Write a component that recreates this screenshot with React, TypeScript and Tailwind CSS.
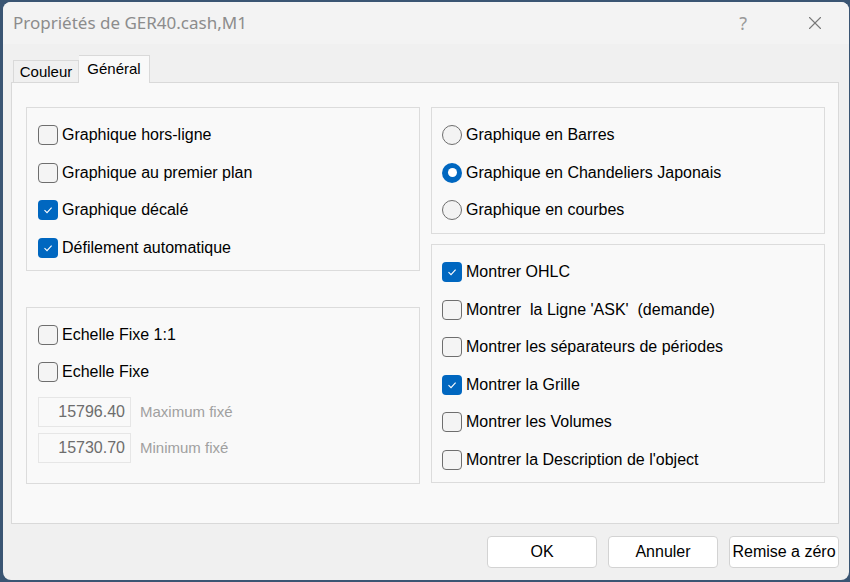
import { X } from "lucide-react";

const font = { fontFamily: '"Liberation Sans", Arial, sans-serif' };

function Check({ checked, label }: { checked?: boolean; label: string }) {
  return (
    <div className="flex items-center h-[20px]">
      {checked ? (
        <div className="w-[20px] h-[20px] rounded-[4px] bg-[#0067c0] flex items-center justify-center flex-shrink-0">
          <svg width="12" height="12" viewBox="0 0 12 12">
            <polyline points="2.5,6.2 5,8.6 9.6,3.6" fill="none" stroke="white" strokeWidth="1.1" />
          </svg>
        </div>
      ) : (
        <div className="w-[20px] h-[20px] rounded-[4px] bg-[#f4f4f4] border border-[#6e6e6e] flex-shrink-0" />
      )}
      <span className="ml-[4px] text-[16px] text-black whitespace-pre">{label}</span>
    </div>
  );
}

function Radio({ checked, label }: { checked?: boolean; label: string }) {
  return (
    <div className="flex items-center h-[20px]">
      {checked ? (
        <div className="w-[20px] h-[20px] rounded-full bg-[#0067c0] flex items-center justify-center flex-shrink-0">
          <div className="w-[9px] h-[9px] rounded-full bg-white" />
        </div>
      ) : (
        <div className="w-[20px] h-[20px] rounded-full bg-[#f3f3f3] border border-[#6e6e6e] flex-shrink-0" />
      )}
      <span className="ml-[4px] text-[16px] text-black">{label}</span>
    </div>
  );
}

function Field({ value, label }: { value: string; label: string }) {
  return (
    <div className="flex items-center">
      <div className="w-[93px] h-[30px] border border-[#e6e6e6] bg-[#f9f9f9] flex items-center justify-end pr-[5px] text-[16px] text-[#6d6d6d]">
        {value}
      </div>
      <span className="ml-[9px] text-[15px] text-[#a0a0a0]">{label}</span>
    </div>
  );
}

function Btn({ children }: { children: string }) {
  return (
    <button className="w-[110px] h-[32px] bg-white border border-[#d3d3d3] rounded-[4px] text-[16px] text-black flex items-center justify-center">
      {children}
    </button>
  );
}

export default function App() {
  return (
    <div className="w-[850px] h-[582px] bg-[#3a5573] pt-[2px] pl-[3px] pr-[1px] pb-[2px]" style={font}>
      <div className="w-full h-full bg-[#f0f0f0] rounded-[8px] overflow-hidden flex flex-col">
        <div className="h-[42px] bg-[#f3f3f3] flex items-center pl-[10px] flex-shrink-0">
          <span className="text-[17px] text-[#8c8c8c]" style={{ fontFamily: '"Noto Sans", "Open Sans", sans-serif' }}>
            Propriétés de GER40.cash,M1
          </span>
          <span className="ml-auto mr-[57px] text-[18px] text-[#9a9a9a]" style={{ fontFamily: '"Noto Sans", sans-serif' }}>?</span>
          <X className="w-[22px] h-[22px] text-[#7a7a7a] mr-[23px]" strokeWidth={1.2} />
        </div>

        <div className="flex items-end h-[27px] mt-[11px] ml-[10px]">
          <div className="h-[22px] w-[66px] border border-b-0 border-[#d9d9d9] bg-[#f0f0f0] flex items-center justify-center pt-[2px] text-[15px] text-black">
            Couleur
          </div>
          <div className="h-[28px] w-[71px] border border-b-0 border-l-0 border-[#d9d9d9] bg-[#f9f9f9] flex items-start pt-[2px] justify-center text-[15px] text-black relative z-10 -mb-[1px]">
            Général
          </div>
        </div>

        <div className="ml-[8px] w-[828px] h-[442px] border border-[#d9d9d9] bg-[#f9f9f9] flex gap-[11px] pl-[14px] pt-[24px]">
          <div className="flex flex-col w-[394px]">
            <div className="h-[164px] border border-[#dcdcdc] flex flex-col gap-[17.5px] pl-[11px] pt-[17px]">
              <Check label="Graphique hors-ligne" />
              <Check label="Graphique au premier plan" />
              <Check checked label="Graphique décalé" />
              <Check checked label="Défilement automatique" />
            </div>
            <div className="h-[177px] mt-[36px] border border-[#dcdcdc] flex flex-col pl-[11px] pt-[17px]">
              <div className="flex flex-col gap-[17px]">
                <Check label="Echelle Fixe 1:1" />
                <Check label="Echelle Fixe" />
              </div>
              <div className="flex flex-col gap-[6px] mt-[15px]">
                <Field value="15796.40" label="Maximum fixé" />
                <Field value="15730.70" label="Minimum fixé" />
              </div>
            </div>
          </div>
          <div className="flex flex-col w-[394px]">
            <div className="h-[127px] border border-[#dcdcdc] flex flex-col gap-[17.5px] pl-[10px] pt-[17px]">
              <Radio label="Graphique en Barres" />
              <Radio checked label="Graphique en Chandeliers Japonais" />
              <Radio label="Graphique en courbes" />
            </div>
            <div className="h-[239px] mt-[10px] border border-[#dcdcdc] flex flex-col gap-[17.6px] pl-[10px] pt-[17px]">
              <Check checked label="Montrer OHLC" />
              <Check label="Montrer  la Ligne 'ASK'  (demande)" />
              <Check label="Montrer les séparateurs de périodes" />
              <Check checked label="Montrer la Grille" />
              <Check label="Montrer les Volumes" />
              <Check label="Montrer la Description de l'object" />
            </div>
          </div>
        </div>

        <div className="flex justify-end gap-[11px] mt-[12px] mr-[10px]">
          <Btn>OK</Btn>
          <Btn>Annuler</Btn>
          <Btn>Remise a zéro</Btn>
        </div>
      </div>
    </div>
  );
}
